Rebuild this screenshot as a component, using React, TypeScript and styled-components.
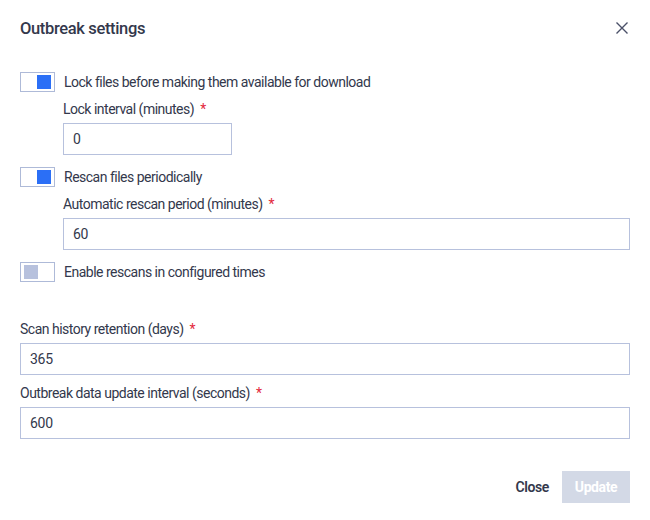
import React, { useState } from "react";
import styled, { createGlobalStyle } from "styled-components";

const Global = createGlobalStyle`
  html, body { margin: 0; padding: 0; background: #ffffff; }
  body { font-family: "Roboto", "Liberation Sans", sans-serif; color: #33384c; }
  * { box-sizing: border-box; }
`;

const Dialog = styled.div`
  width: 650px;
  height: 520px;
  padding: 16px 20px 16px 20px;
  display: flex;
  flex-direction: column;
`;

const Header = styled.div`
  display: flex;
  align-items: center;
  justify-content: space-between;
  height: 24px;
`;

const Title = styled.h2`
  margin: 0;
  font-size: 16.5px;
  font-weight: 500;
  letter-spacing: -0.35px;
  color: #33384c;
`;

const CloseIcon = styled.button`
  border: 0;
  background: transparent;
  padding: 0;
  width: 16px;
  height: 16px;
  display: flex;
  align-items: center;
  justify-content: center;
  color: #4a5068;
  cursor: pointer;
`;

const Body = styled.div`
  display: flex;
  flex-direction: column;
  margin-top: 32px;
`;

const ToggleRow = styled.label`
  display: flex;
  align-items: center;
  gap: 9px;
  height: 20px;
  font-size: 14px;
  letter-spacing: -0.5px;
  cursor: pointer;
`;

const ToggleBox = styled.span<{ $on: boolean }>`
  width: 35px;
  height: 20px;
  border: 1px solid #aebad8;
  display: flex;
  align-items: center;
  justify-content: ${(p) => (p.$on ? "flex-end" : "flex-start")};
  padding: 0 3px;
  flex-shrink: 0;
`;

const Knob = styled.span<{ $on: boolean }>`
  width: 14px;
  height: 14px;
  background: ${(p) => (p.$on ? "#2b6ff6" : "#b7c1dd")};
`;

const Nested = styled.div`
  display: flex;
  flex-direction: column;
  padding-left: 43px;
  margin-top: 7px;
  margin-bottom: 12px;
`;

const Field = styled.div<{ $short?: boolean }>`
  display: flex;
  flex-direction: column;
  gap: 4px;
  width: ${(p) => (p.$short ? "169px" : "100%")};
`;

const Label = styled.div`
  font-size: 14px;
  letter-spacing: -0.5px;
  height: 20px;
  line-height: 20px;
  color: #33384c;
`;

const Req = styled.span`
  color: #e3283c;
  margin-left: 6px;
`;

const Input = styled.input`
  height: 32px;
  width: 100%;
  border: 1px solid #b7c1dd;
  padding: 0 9px;
  font-family: inherit;
  font-size: 14px;
  letter-spacing: -0.3px;
  color: #33384c;
  outline: none;
  background: #fff;
`;

const Section = styled.div`
  display: flex;
  flex-direction: column;
  gap: 8px;
  margin-top: 37px;
`;

const Footer = styled.div`
  display: flex;
  justify-content: flex-end;
  align-items: center;
  gap: 13px;
  margin-top: 32px;
`;

const TextButton = styled.button`
  border: 0;
  background: transparent;
  font-family: inherit;
  font-size: 14px;
  font-weight: 600;
  letter-spacing: -0.4px;
  color: #33384c;
  height: 32px;
  padding: 0;
  cursor: pointer;
`;

const PrimaryButton = styled.button`
  border: 0;
  background: #d3d9e6;
  color: #ffffff;
  font-family: inherit;
  font-size: 14px;
  font-weight: 700;
  letter-spacing: -0.4px;
  height: 32px;
  width: 68px;
  padding: 0;
  cursor: default;
`;

function Toggle({ on, label, onClick }: { on: boolean; label: string; onClick: () => void }) {
  return (
    <ToggleRow onClick={onClick}>
      <ToggleBox $on={on}>
        <Knob $on={on} />
      </ToggleBox>
      <span>{label}</span>
    </ToggleRow>
  );
}

export default function App() {
  const [lock, setLock] = useState(true);
  const [rescan, setRescan] = useState(true);
  const [timed, setTimed] = useState(false);
  return (
    <>
      <Global />
      <Dialog>
        <Header>
          <Title>Outbreak settings</Title>
          <CloseIcon aria-label="Close">
            <svg width="14" height="14" viewBox="0 0 14 14" fill="none" stroke="currentColor" strokeWidth="1.4">
              <path d="M1.5 1.5 L12.5 12.5 M12.5 1.5 L1.5 12.5" />
            </svg>
          </CloseIcon>
        </Header>
        <Body>
          <Toggle on={lock} label="Lock files before making them available for download" onClick={() => setLock(!lock)} />
          <Nested>
            <Field $short>
              <Label>
                Lock interval (minutes)<Req>*</Req>
              </Label>
              <Input defaultValue="0" />
            </Field>
          </Nested>
          <Toggle on={rescan} label="Rescan files periodically" onClick={() => setRescan(!rescan)} />
          <Nested>
            <Field>
              <Label>
                Automatic rescan period (minutes)<Req>*</Req>
              </Label>
              <Input defaultValue="60" />
            </Field>
          </Nested>
          <Toggle on={timed} label="Enable rescans in configured times" onClick={() => setTimed(!timed)} />
          <Section>
            <Field>
              <Label>
                Scan history retention (days)<Req>*</Req>
              </Label>
              <Input defaultValue="365" />
            </Field>
            <Field>
              <Label>
                Outbreak data update interval (seconds)<Req>*</Req>
              </Label>
              <Input defaultValue="600" />
            </Field>
          </Section>
        </Body>
        <Footer>
          <TextButton>Close</TextButton>
          <PrimaryButton disabled>Update</PrimaryButton>
        </Footer>
      </Dialog>
    </>
  );
}
